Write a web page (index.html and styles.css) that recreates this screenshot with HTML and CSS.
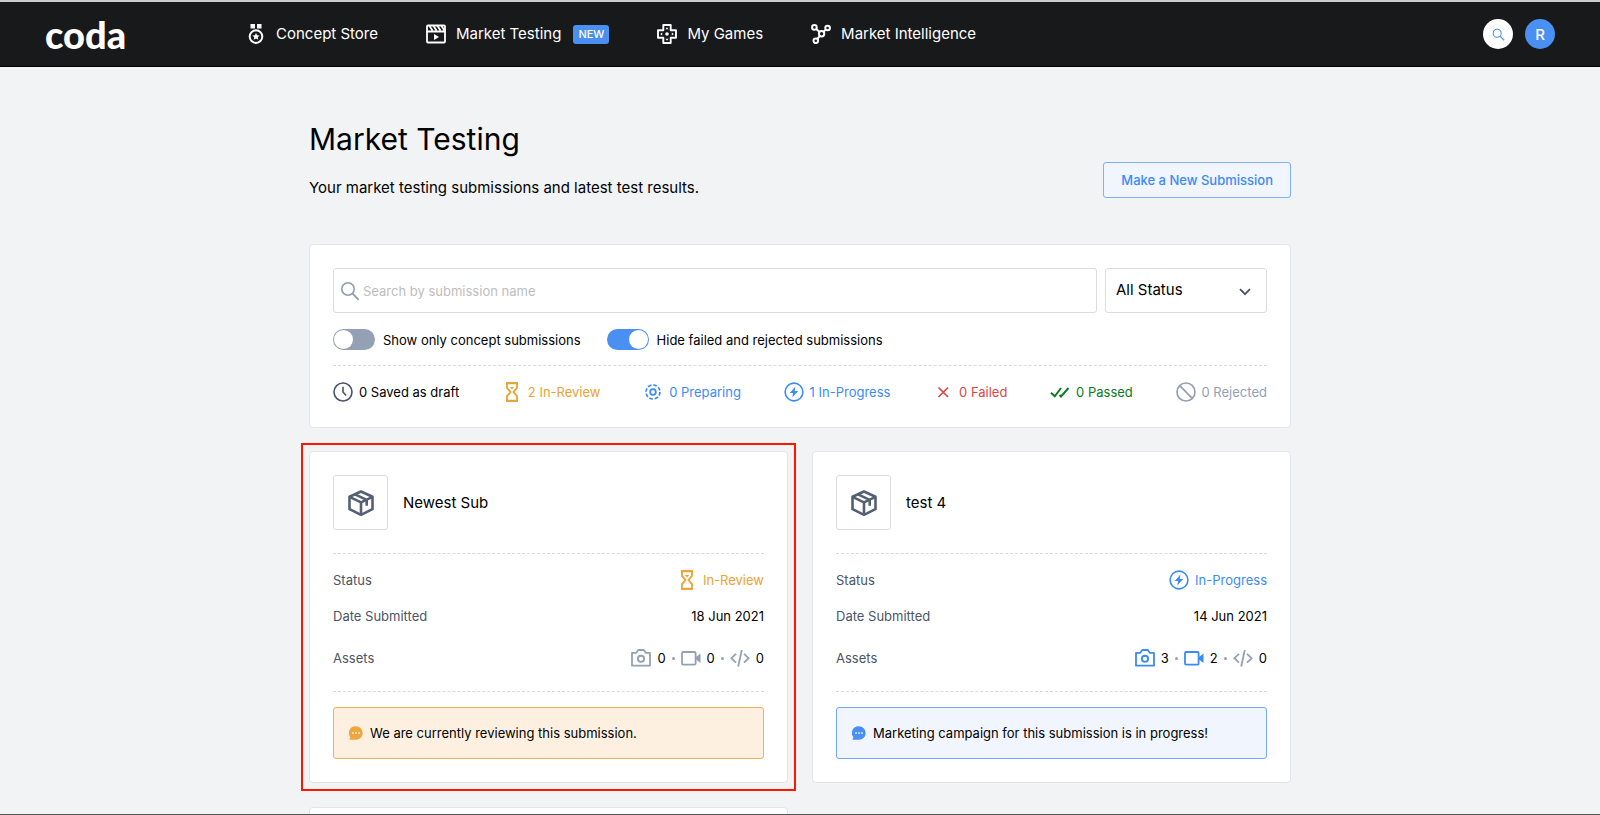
FILE: index.html
```html
<!DOCTYPE html>
<html lang="en">
<head>
    <meta charset="UTF-8">
    <meta name="viewport" content="width=device-width, initial-scale=1.0">
    <title>Market Testing</title>
    <link rel="stylesheet" href="styles.css">
</head>
<body>

    <!-- Shared icons -->
    <svg class="sprite" aria-hidden="true">
        <symbol id="search" viewBox="0 0 20 20">
            <circle cx="8" cy="8" r="6.2" fill="none" stroke="currentColor" stroke-width="1.6"/>
            <path d="M12.4 12.4L18.6 18.8" stroke="currentColor" stroke-width="1.9"/>
        </symbol>
        <symbol id="hourglass" viewBox="0 0 20 20">
            <path d="M5 1.2h10v4.600L11.500 10l3.500 4.200v4.600H5v-4.600L8.500 10 5 5.800z" fill="none" stroke="currentColor" stroke-width="1.800"/>
            <path d="M4 1.200h12M4 18.800h12" stroke="currentColor" stroke-width="2"/>
            <path d="M7.800 5h4.400L10 7.600z" fill="currentColor"/>
        </symbol>
        <symbol id="bolt" viewBox="0 0 20 20">
            <circle cx="10" cy="10" r="8.900" fill="none" stroke="currentColor" stroke-width="1.600"/>
            <path d="M11.400 4.600L5.800 11h3.300l-.8 4.400L14.200 9h-3.500z" fill="currentColor"/>
        </symbol>
        <symbol id="box" viewBox="0 0 28 28">
            <g fill="none" stroke="currentColor" stroke-width="2.600" stroke-linejoin="round">
                <path d="M14 2.500l11.500 5.300v12.400L14 25.800 2.500 20.200V7.800z"/>
                <path d="M2.500 7.800L14 13.300l11.500-5.500M14 13.300v12.500M8 5.300l11.700 5.600v5.800"/>
            </g>
        </symbol>
        <symbol id="camera" viewBox="0 0 20 20">
            <path d="M1 4.800h4.300L7.200 2h5.600l1.900 2.800H19v12.900H1z" fill="none" stroke="currentColor" stroke-width="1.800" stroke-linejoin="round"/>
            <circle cx="10" cy="10.800" r="3.100" fill="none" stroke="currentColor" stroke-width="1.900"/>
        </symbol>
        <symbol id="video" viewBox="0 0 20 20">
            <rect x="1" y="4" width="13.600" height="12.600" rx="1" fill="none" stroke="currentColor" stroke-width="1.800"/>
            <path d="M15 9l4.500-3.500v9.500L15 11.600z" fill="currentColor"/>
        </symbol>
        <symbol id="code" viewBox="0 0 20 20">
            <path d="M6 5.800L1.400 10.200 6 14.600M14 5.800l4.600 4.400-4.600 4.400M11.800 2L8.200 18.500" fill="none" stroke="currentColor" stroke-width="1.800"/>
        </symbol>
        <symbol id="chat" viewBox="0 0 14 14">
            <path d="M7 .3a6.700 6.700 0 1 1 0 13.400H1.200a.7.7 0 0 1-.5-1.100l.8-1.200A6.700 6.700 0 0 1 7 .3z" fill="currentColor"/>
            <path d="M3.300 7h1.500M6.300 7h1.500M9.300 7h1.500" stroke="#fff" stroke-width="1.300"/>
        </symbol>
    </svg>

    <header class="topbar">
        <a class="logo" href="#">coda</a>
        <nav class="nav">
            <a href="#">
                <svg class="icon" viewBox="0 0 20 20" fill="none" stroke="#fff" stroke-width="2">
                    <path d="M4.500 0h4.500v4.500H4.500zM11 0h4.500v4.500H11z" fill="#fff" stroke="none"/>
                    <circle cx="10" cy="12.600" r="6.300"/>
                    <path d="M10 9l1.100 2.300 2.500.3-1.800 1.700.5 2.500-2.300-1.200-2.300 1.200.5-2.500-1.800-1.700 2.500-.3z" fill="#fff" stroke="none"/>
                </svg>
                Concept Store
            </a>
            <a href="#">
                <svg class="icon" viewBox="0 0 20 20" fill="none" stroke="#fff" stroke-width="1.800">
                    <rect x="1" y="1.500" width="18" height="17" rx="1"/>
                    <path d="M1 7.500h18M3.500 2l3 4.500M7.500 2l3 4.500M11.500 2l3 4.500M15.500 2l3 4.500"/>
                    <path d="M8 10l5 3-5 3z" fill="#fff" stroke="none"/>
                </svg>
                Market Testing
                <span class="badge">NEW</span>
            </a>
            <a href="#">
                <svg class="icon" viewBox="0 0 20 20" fill="none" stroke="#fff" stroke-width="1.900">
                    <path d="M6.300 1h7.400v5.300H19v7.400h-5.300V19H6.300v-5.300H1V6.300h5.300z" stroke-linejoin="round"/>
                    <path d="M10 3.200l1.500 2h-3zM10 16.800l1.500-2h-3zM3.200 10l2-1.500v3zM16.800 10l-2-1.500v3z" fill="#fff" stroke="none"/>
                    <circle cx="10" cy="10" r="1.800" fill="#fff" stroke="none"/>
                </svg>
                My Games
            </a>
            <a href="#">
                <svg class="icon" viewBox="0 0 20 20" fill="none" stroke="#fff" stroke-width="2">
                    <circle cx="3.400" cy="3.400" r="2.300"/>
                    <circle cx="16.600" cy="4" r="2.300"/>
                    <circle cx="10.600" cy="9.800" r="2.700"/>
                    <circle cx="4.800" cy="16.800" r="2.300"/>
                    <path d="M5.200 5l3.400 3M14.800 5.600l-2.200 2.200M8.800 12l-2.600 3"/>
                </svg>
                Market Intelligence
            </a>
        </nav>
        <div class="account">
            <button class="round round-search" aria-label="Search"><svg><use href="#search"/></svg></button>
            <button class="round round-user">R</button>
        </div>
    </header>

    <main class="container">
        <div class="page-head">
            <div>
                <h1>Market Testing</h1>
                <p>Your market testing submissions and latest test results.</p>
            </div>
            <button class="new-btn">Make a New Submission</button>
        </div>

        <!-- Filters -->
        <section class="card filters">
            <div class="filter-row">
                <label class="search">
                    <svg class="icon"><use href="#search"/></svg>
                    <input type="text" placeholder="Search by submission name" aria-label="Search by submission name">
                </label>
                <div class="select">
                    <select aria-label="Status">
                        <option>All Status</option>
                    </select>
                    <svg viewBox="0 0 12 8"><path d="M1 1.200l5 5 5-5" fill="none" stroke="#4a5568" stroke-width="1.800"/></svg>
                </div>
            </div>
            <div class="toggles">
                <label><input type="checkbox"> Show only concept submissions</label>
                <label><input type="checkbox" checked> Hide failed and rejected submissions</label>
            </div>
            <ul class="stats">
                <li>
                    <svg class="icon slate" viewBox="0 0 20 20" fill="none" stroke="currentColor" stroke-width="1.600">
                        <circle cx="10" cy="10" r="9"/>
                        <path d="M10 4.800V10l3 3.500"/>
                    </svg>
                    0 Saved as draft
                </li>
                <li class="orange"><svg class="icon"><use href="#hourglass"/></svg>2 In-Review</li>
                <li class="blue">
                    <svg class="icon" viewBox="0 0 20 20" fill="none" stroke="currentColor">
                        <circle cx="10" cy="10" r="7" stroke-width="1.700" stroke-dasharray="3.700 1.800"/>
                        <circle cx="10" cy="10" r="2.800" stroke-width="1.800"/>
                    </svg>
                    0 Preparing
                </li>
                <li class="blue"><svg class="icon"><use href="#bolt"/></svg>1 In-Progress</li>
                <li class="red">
                    <svg class="icon" viewBox="0 0 20 20"><path d="M5.500 5.500l9.500 9.500M15 5.500L5.500 15" stroke="currentColor" stroke-width="1.700"/></svg>
                    0 Failed
                </li>
                <li class="green">
                    <svg class="icon" viewBox="0 0 20 20"><path d="M1 10.800l3.800 3.500L11 6M9.500 13l1.500 1.500L18.500 6" fill="none" stroke="currentColor" stroke-width="1.900"/></svg>
                    0 Passed
                </li>
                <li class="grey">
                    <svg class="icon" viewBox="0 0 20 20" fill="none" stroke="currentColor" stroke-width="1.700">
                        <circle cx="10" cy="10" r="9"/>
                        <path d="M3.700 3.700l12.600 12.600"/>
                    </svg>
                    0 Rejected
                </li>
            </ul>
        </section>

        <!-- Submissions -->
        <section class="grid">
            <article class="card selected">
                <div class="card-head">
                    <span class="thumb"><svg><use href="#box"/></svg></span>
                    <h2>Newest Sub</h2>
                </div>
                <dl>
                    <div><dt>Status</dt><dd class="orange"><svg class="icon"><use href="#hourglass"/></svg>In-Review</dd></div>
                    <div><dt>Date Submitted</dt><dd>18 Jun 2021</dd></div>
                    <div class="assets">
                        <dt>Assets</dt>
                        <dd>
                            <svg class="icon grey"><use href="#camera"/></svg>0<i></i>
                            <svg class="icon grey"><use href="#video"/></svg>0<i></i>
                            <svg class="icon grey"><use href="#code"/></svg>0
                        </dd>
                    </div>
                </dl>
                <p class="note note-orange"><svg><use href="#chat"/></svg>We are currently reviewing this submission.</p>
            </article>

            <article class="card">
                <div class="card-head">
                    <span class="thumb"><svg><use href="#box"/></svg></span>
                    <h2>test 4</h2>
                </div>
                <dl>
                    <div><dt>Status</dt><dd class="blue"><svg class="icon"><use href="#bolt"/></svg>In-Progress</dd></div>
                    <div><dt>Date Submitted</dt><dd>14 Jun 2021</dd></div>
                    <div class="assets">
                        <dt>Assets</dt>
                        <dd>
                            <svg class="icon blue"><use href="#camera"/></svg>3<i></i>
                            <svg class="icon blue"><use href="#video"/></svg>2<i></i>
                            <svg class="icon grey"><use href="#code"/></svg>0
                        </dd>
                    </div>
                </dl>
                <p class="note note-blue"><svg><use href="#chat"/></svg>Marketing campaign for this submission is in progress!</p>
            </article>

            <article class="card"></article>
        </section>
    </main>

</body>
</html>
```

FILE: styles.css
```css
* {
    box-sizing: border-box;
}
body {
    margin: 0;
    height: 100vh;
    overflow: hidden;
    display: flex;
    flex-direction: column;
    font-family: Inter, sans-serif;
    font-size: 13px;
    line-height: 20px;
    color: #000;
    background: #f1f3f5;
    border-top: 2px solid #c9cdd0;
    border-bottom: 1px solid #55535a;
}
h1, h2, p, ul, dl, dd {
    margin: 0;
    padding: 0;
    font-weight: 400;
}
a {
    color: inherit;
    text-decoration: none;
}
button, input, select {
    font-family: inherit;
}
.sprite {
    position: absolute;
    width: 0;
    height: 0;
}
.icon {
    width: 20px;
    height: 20px;
    flex: none;
}

/* Header */
.topbar {
    flex: none;
    display: flex;
    align-items: center;
    height: 65px;
    padding: 0 45px;
    background: #18191b;
    border-bottom: 1px solid #000;
    color: #fff;
}
.logo {
    width: 201px;
    font-family: Lato, sans-serif;
    font-size: 38px;
    font-weight: 900;
    line-height: 40px;
}
.nav {
    display: flex;
    gap: 48px;
    font-size: 15px;
}
.nav a {
    display: flex;
    align-items: center;
    gap: 10px;
}
.badge {
    margin-left: 2px;
    padding: 0 5px;
    border-radius: 3px;
    background: #4a90f2;
    font-size: 11px;
    font-weight: 500;
    line-height: 19px;
}
.account {
    display: flex;
    gap: 12px;
    margin-left: auto;
}
.round {
    display: flex;
    align-items: center;
    justify-content: center;
    width: 30px;
    height: 30px;
    padding: 0;
    border: none;
    border-radius: 50%;
    font-size: 15px;
    font-weight: 500;
    cursor: pointer;
}
.round-search {
    background: #fff;
    color: #4a90f2;
}
.round-search svg {
    width: 13px;
    height: 13px;
}
.round-user {
    background: #4a90f2;
    color: #fff;
}

/* Page */
.container {
    flex: none;
    width: 100%;
    max-width: 982px;
    margin: 0 auto;
}
.page-head {
    display: flex;
    justify-content: space-between;
    align-items: flex-end;
    padding: 52px 0 46px;
}
h1 {
    font-size: 30px;
    line-height: 40px;
    margin-bottom: 19px;
}
.page-head p {
    font-size: 15px;
}
.new-btn {
    height: 36px;
    padding: 0 17px;
    border: 1px solid #7fb0f7;
    border-radius: 3px;
    background: #f0f5fe;
    color: #3b8bf5;
    font-size: 13px;
    font-weight: 500;
    cursor: pointer;
}
.card {
    padding: 23px;
    background: #fff;
    border: 1px solid #e2e4e6;
    border-radius: 4px;
}

/* Filters */
.filters {
    padding-bottom: 25px;
}
.filter-row {
    display: flex;
    gap: 8px;
}
.search {
    flex: 1;
    display: flex;
    align-items: center;
    height: 45px;
    padding: 0 6px;
    border: 1px solid #dcdcdc;
    border-radius: 3px;
    color: #929db0;
}
.search input {
    flex: 1;
    padding: 0 3px;
    border: none;
    outline: none;
    font-size: 13px;
}
.search input::placeholder {
    color: #bdbdbd;
}
.select {
    position: relative;
    width: 162px;
}
.select select {
    appearance: none;
    width: 100%;
    height: 45px;
    padding: 0 10px 3px;
    border: 1px solid #dcdcdc;
    border-radius: 3px;
    background: #fff;
    color: #000;
    font-size: 15px;
}
.select svg {
    position: absolute;
    right: 16px;
    top: 20px;
    width: 12px;
    height: 8px;
    pointer-events: none;
}
.toggles {
    display: flex;
    gap: 26px;
    padding: 16px 0 15px;
    border-bottom: 1px dashed #dadada;
}
.toggles label {
    display: flex;
    align-items: center;
    gap: 8px;
}
.toggles input {
    appearance: none;
    width: 42px;
    height: 21px;
    margin: 0;
    padding: 1px;
    border-radius: 11px;
    background: #94a0b4;
}
.toggles input::before {
    content: "";
    display: block;
    width: 19px;
    height: 19px;
    border-radius: 50%;
    background: #fff;
}
.toggles input:checked {
    background: #4a90f2;
}
.toggles input:checked::before {
    margin-left: auto;
}
.stats {
    display: flex;
    justify-content: space-between;
    padding-top: 16px;
    list-style: none;
}
.stats li {
    display: flex;
    align-items: center;
    gap: 6px;
}
.slate { color: #4a5568; }
.orange { color: #eba233; }
.blue { color: #3b8bf5; }
.red { color: #e04545; }
.green { color: #0a7a22; }
.grey { color: #94a0b4; }

/* Submissions */
.grid {
    display: grid;
    grid-template-columns: 1fr 1fr;
    gap: 24px;
    margin-top: 23px;
}
.selected {
    position: relative;
}
.selected::after {
    content: "";
    position: absolute;
    inset: -9px;
    border: 2px solid #ff1500;
    pointer-events: none;
}
.card-head {
    display: flex;
    align-items: center;
    gap: 15px;
    padding-bottom: 23px;
    border-bottom: 1px dashed #dadada;
}
.card-head h2 {
    font-size: 15px;
}
.thumb {
    display: flex;
    align-items: center;
    justify-content: center;
    width: 55px;
    height: 55px;
    border: 1px solid #dcdcdc;
    border-radius: 3px;
    color: #556074;
}
.thumb svg {
    width: 28px;
    height: 28px;
}
dl {
    padding: 16px 0 23px;
    border-bottom: 1px dashed #dadada;
}
dl div {
    display: flex;
    justify-content: space-between;
    align-items: center;
    margin-bottom: 16px;
}
dl .assets {
    margin: 22px 0 0;
}
dt {
    color: #4a5568;
}
dd {
    display: flex;
    align-items: center;
    gap: 6px;
}
dd i {
    width: 3px;
    height: 3px;
    border-radius: 50%;
    background: #94a0b4;
}
.note {
    display: flex;
    align-items: center;
    gap: 7px;
    margin-top: 15px;
    padding: 15px;
    border: 1px solid;
    border-radius: 3px;
}
.note svg {
    width: 14px;
    height: 14px;
}
.note-orange {
    background: #fdf0e0;
    border-color: #efb25c;
}
.note-orange svg {
    color: #efa640;
}
.note-blue {
    background: #f0f5fe;
    border-color: #74a8f5;
}
.note-blue svg {
    color: #4a90f2;
}
@media (max-width: 1000px) {
    .container {
        width: 90%;
    }
}
```
